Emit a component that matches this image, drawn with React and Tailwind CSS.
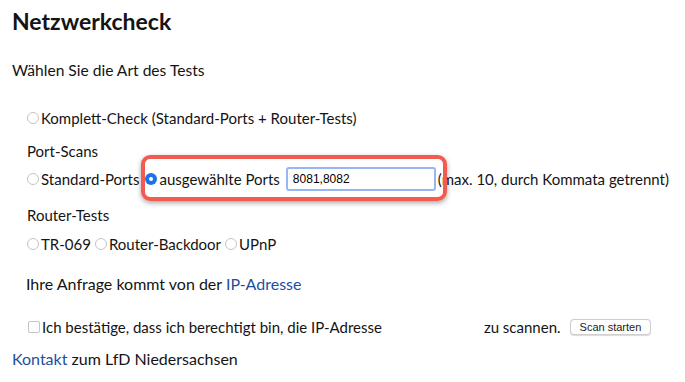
import React from "react";

function Radio({ checked }) {
  return checked ? (
    <span className="inline-flex h-[12px] w-[12px] shrink-0 items-center justify-center rounded-full bg-[#1a73e8]">
      <span className="h-[4px] w-[4px] rounded-full bg-white" />
    </span>
  ) : (
    <span className="inline-block h-[12px] w-[12px] shrink-0 rounded-full border border-[#c4c4c4] bg-white" />
  );
}

function Option({ label, checked, className = "" }) {
  return (
    <label className={`flex shrink-0 items-center gap-[2px] whitespace-nowrap ${className}`}>
      <Radio checked={checked} />
      <span>{label}</span>
    </label>
  );
}

export default function App() {
  return (
    <div className="min-h-[382px] whitespace-nowrap bg-white px-3 pt-[5px] text-[15px] leading-[24px] text-[#141414] font-['Lato',sans-serif]">
      <h1 className="text-[23px] font-bold leading-[32px]">Netzwerkcheck</h1>

      <p className="mt-[21px] text-[15.6px]">Wählen Sie die Art des Tests</p>

      <div className="mt-[24px] pl-[15px]">
        <Option label="Komplett-Check (Standard-Ports + Router-Tests)" />
      </div>

      <p className="mt-[9px] pl-[15px]">Port-Scans</p>

      <div className="relative mt-[4px] flex h-[24px] items-center pl-[15px]">
        <Option label="Standard-Ports" />
        <Option label="ausgewählte Ports" checked className="ml-[6px]" />
        <input
          readOnly
          value="8081,8082"
          className="ml-[6px] h-[24px] w-[150px] shrink-0 rounded-[3px] border-2 border-[#98b6f3] px-[5px] text-[12px] text-black outline-none font-['Liberation_Sans',sans-serif]"
        />
        <span className="ml-[2px] shrink-0">(max. 10, durch Kommata getrennt)</span>
        <div className="pointer-events-none absolute left-[129px] top-[-12px] h-[46px] w-[306px] rounded-[9px] border-[4px] border-[#f25c50] shadow-[0_2px_5px_rgba(0,0,0,0.35)]" />
      </div>

      <p className="mt-[12px] pl-[15px]">Router-Tests</p>

      <div className="mt-[5px] flex items-center gap-[4px] pl-[15px]">
        <Option label="TR-069" />
        <Option label="Router-Backdoor" />
        <Option label="UPnP" />
      </div>

      <p className="mt-[16px] pl-[14px] text-[16px]">
        Ihre Anfrage kommt von der{" "}
        <a href="#" className="text-[#1d4fa0]">IP-Adresse</a>
      </p>

      <div className="mt-[19px] flex items-center pl-[16px]">
        <span className="inline-block h-[12px] w-[12px] shrink-0 rounded-[2px] border border-[#c4c4c4] bg-white" />
        <span className="ml-[2px] shrink-0">Ich bestätige, dass ich berechtigt bin, die IP-Adresse</span>
        <span className="ml-[102px] shrink-0">zu scannen.</span>
        <button className="ml-[9px] h-[16px] shrink-0 whitespace-nowrap rounded-[4px] border border-[#cfcfcf] bg-white px-[9px] text-[11px] leading-[14px] text-[#222] shadow-[0_0.5px_1px_rgba(0,0,0,0.15)] font-['Liberation_Sans',sans-serif]">
          Scan starten
        </button>
      </div>

      <p className="mt-[8px] text-[16px]">
        <a href="#" className="text-[#1d4fa0]">Kontakt</a> zum LfD Niedersachsen
      </p>
    </div>
  );
}
